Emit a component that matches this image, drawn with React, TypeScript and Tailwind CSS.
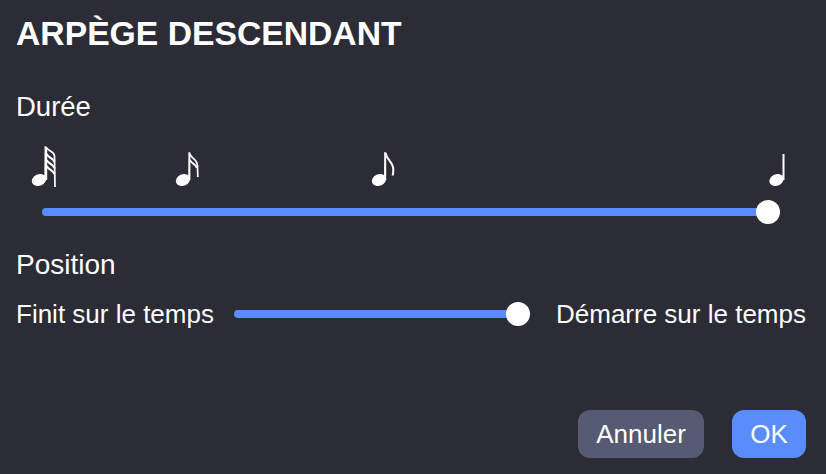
function Head({ cx }: { cx: number }) {
  return <ellipse cx={cx} cy={180} rx={7.4} ry={5.8} transform={`rotate(-24 ${cx} 180)`} fill="#fff" />;
}

function Note({ x, w, children }: { x: number; w: number; children: React.ReactNode }) {
  return (
    <svg width={w} height={48} viewBox={`${x} 145 ${w} 48`} className="block shrink-0">
      {children}
    </svg>
  );
}

function Slider({ width }: { width: string }) {
  return (
    <div className={`${width} h-6 flex items-center shrink-0`}>
      <div className="h-2 flex-1 rounded-l-full bg-[#5a8dfc]" />
      <div className="w-6 h-6 -ml-3 rounded-full bg-white shrink-0" />
    </div>
  );
}

export default function App() {
  return (
    <div
      className="w-[826px] h-[474px] bg-[#2b2c35] text-white flex flex-col pl-[16px] pr-[20px] overflow-hidden"
      style={{ fontFamily: '"Liberation Sans", Arial, sans-serif' }}
    >
      <h1 className="text-[33.700px] leading-[36px] font-bold mt-[15px] whitespace-nowrap">ARPÈGE DESCENDANT</h1>

      <div className="text-[27.500px] leading-[30px] mt-[41px]">Durée</div>

      <div className="flex h-[48px] mt-[23px] -ml-[16px]">
        <div className="ml-[30px]">
          <Note x={30} w={28}>
            <Head cx={39} />
            <path d="M44.300 180 L44.600 146 L47.200 147 L47.200 180 Z" fill="#fff" />
            <g fill="none" stroke="#fff" strokeWidth={2.200}>
              <path d="M46.500 148 C49 151.500 54 151.500 54.500 156 L55 187" strokeWidth={1.700} />
              <path d="M46.500 154 C49 158 53 158 54.500 162" />
              <path d="M46.500 160 C49 164 53 164 54.500 168" />
              <path d="M46.500 166 C49 170 53 170 54.500 174" />
            </g>
          </Note>
        </div>
        <div className="ml-[115px]">
          <Note x={173} w={28}>
            <Head cx={183} />
            <path d="M188.200 180 L188.400 152 L190.400 152.500 L190.400 180 Z" fill="#fff" />
            <g fill="none" stroke="#fff" strokeWidth={1.700}>
              <path d="M190 154 C191.500 159 197.500 159 197.500 166 L197.800 177" />
              <path d="M190 160 C191.500 164 196 164 197 168" strokeWidth={2} />
            </g>
          </Note>
        </div>
        <div className="ml-[168px]">
          <Note x={369} w={28}>
            <Head cx={379} />
            <path d="M384 180 L384.200 152 L386.200 152.500 L386.200 180 Z" fill="#fff" />
            <path d="M385.500 153 C387 161 393.500 162 393.300 170 C393.300 172.500 393 174 392.600 175.500" fill="none" stroke="#fff" strokeWidth={2} />
          </Note>
        </div>
        <div className="ml-[368px]">
          <Note x={765} w={24}>
            <Head cx={776.500} />
            <rect x={782.500} y={154} width={2} height={26} fill="#fff" />
          </Note>
        </div>
      </div>

      <div className="mt-[7px] ml-[26px]">
        <Slider width="w-[738px]" />
      </div>

      <div className="text-[28px] leading-[30px] mt-[26px]">Position</div>

      <div className="flex items-center mt-[22px] h-6">
        <span className="text-[26px] leading-[30px] w-[218px] shrink-0 whitespace-nowrap">Finit sur le temps</span>
        <Slider width="w-[296px]" />
        <span className="text-[26px] leading-[30px] ml-[26px] whitespace-nowrap">Démarre sur le temps</span>
      </div>

      <div className="flex justify-end gap-[28px] mt-auto mb-4">
        <button className="w-[126px] h-[48px] rounded-xl bg-[#565a72] text-[26px] text-white">Annuler</button>
        <button className="w-[74px] h-[48px] rounded-xl bg-[#5a8dfc] text-[26px] text-white">OK</button>
      </div>
    </div>
  );
}
